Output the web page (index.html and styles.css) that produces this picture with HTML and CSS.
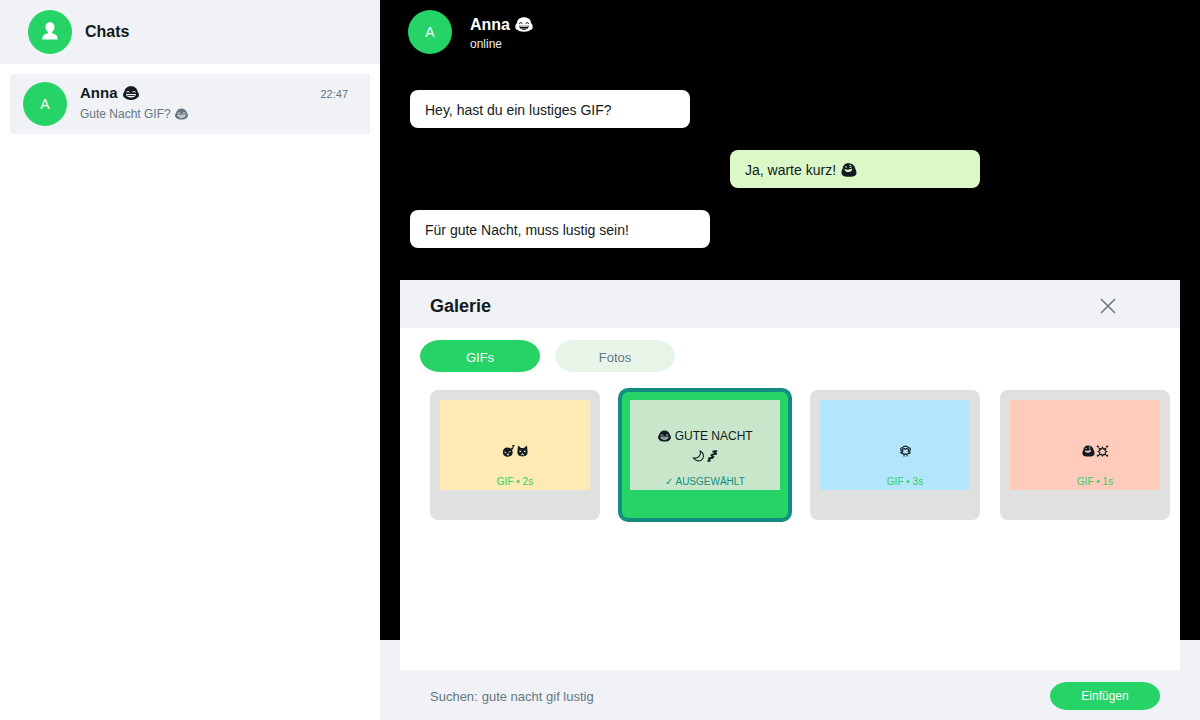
FILE: index.html
```html
<!DOCTYPE html>
<html lang="de">
<head>
    <meta charset="UTF-8">
    <meta name="viewport" content="width=device-width, initial-scale=1.0">
    <title>Chats</title>
    <link rel="stylesheet" href="styles.css">
</head>
<body>
    <svg class="symbols" aria-hidden="true">
        <symbol id="laugh" viewBox="0 0 16 14">
            <path class="fill" d="M8 .2C4.500.2 2 2.200 1.500 5.300.5 6.500 0 8 .1 9.600c.1 1.100.6 1.700 1.400 1.900 1.300 1.700 3.600 2.400 6.500 2.400s5.200-.7 6.500-2.400c.8-.2 1.300-.8 1.400-1.900.1-1.600-.4-3.100-1.400-4.300C14 2.200 11.500.2 8 .2z"/>
            <path class="line" d="M3.300 6.200Q5 4.800 6.600 6.200M9.400 6.200Q11 4.800 12.700 6.200"/>
            <path class="hole" d="M3 8h10c-.2 2.300-2.100 3.600-5 3.600S3.200 10.300 3 8z"/>
            <path class="fill" d="M4.300 9h7.400v.9H4.300z"/>
        </symbol>
        <symbol id="laugh-light" viewBox="0 0 18 15">
            <path class="fill" d="M9 .3C5 .3 2.300 2.500 1.900 6 .8 7.200.2 8.800.3 10.400c.1 1.300.7 2 1.700 2.200 1.500 1.600 4 2.200 7 2.200s5.500-.6 7-2.200c1-.2 1.600-.9 1.700-2.200.1-1.600-.5-3.200-1.600-4.400C15.700 2.500 13 .3 9 .3z"/>
            <path class="line" d="M4.200 6.800Q5.700 4.500 7.300 6.500M10.700 6.500Q12.300 4.500 13.800 6.800"/>
            <path class="hole" d="M4.200 8.700h9.600c-.2 2.600-2 4-4.800 4s-4.600-1.400-4.800-4z"/>
            <path class="fill" d="M5.200 9.200h7.600v.9H5.200zM6.500 10.900h.8v1h-.8zM8.600 10.900h.8v1h-.8zM10.700 10.900h.8v1h-.8z"/>
        </symbol>
        <symbol id="rofl" viewBox="0 0 16 14">
            <path class="fill" d="M7.500.2C4 .2 2 2.300 1.800 5.200.6 7.200.1 9.500.8 11.200c.8 2 3.200 2.600 7.200 2.600s6.400-.6 7.200-2.600c.6-1.600.2-3.800-1-5.800C13.600 2.300 11.300.2 7.500.2z"/>
            <path class="line" d="M4 3.600l1.900.7M8.300 2.600l1.800-.5M8.500 4.600l2-.5"/>
            <path class="hole" d="M3.300 6c2.700 1 5.300.8 8-.5-.2 2.300-1.500 3.600-3.900 3.600-2.300 0-3.800-1-4.100-3.100z"/>
        </symbol>
        <symbol id="sleepy" viewBox="0 0 14 14">
            <path class="fill" d="M6 3C2.700 2.800.5 5 .4 8.300c-.1 3.600 2 5.400 5.700 5.400s6-1.800 5.700-5.500C11.600 5 9.500 3.100 6 3z"/>
            <path class="line" d="M2.200 8.400l2.200.5M7.200 8.200l2.200-.4"/>
            <path class="hole" d="M5 10.200l2-.3.500 1.900-1.600.5z"/>
            <path class="stroke" d="M10 3.800l1.800.3-1.200 1.700M11.300.8l2-.2-1.500 2.600"/>
        </symbol>
        <symbol id="cat" viewBox="0 0 12 13">
            <path class="fill" d="M1.200.6l3.200 2.600h3.200L10.800.6l.7 6.500c.3 3.500-1.900 5.300-5.500 5.300S.2 10.600.5 7.100z"/>
            <path class="hole" d="M2.700 6l2.100.6-.7 1.300-1.400-.4zM9.300 6l-2.100.6.7 1.300 1.400-.4zM5.200 8.800h1.600L6 9.800z"/>
            <path class="line" d="M4.300 10.900l1.700-.8 1.700.8"/>
        </symbol>
        <symbol id="moon" viewBox="0 0 14 14">
            <path class="stroke" d="M9 1.200c1.400 4.600-2.400 9-7.900 8.100 2.300 4.100 7.900 4.700 10.500 1.200 2.300-3.200 1-7.800-2.600-9.300z"/>
        </symbol>
        <symbol id="zzz" viewBox="0 0 14 14">
            <path class="fill" d="M7.300.6l5.300-.4-.2 1.700-1.500 1.500 1.600.1-.7 1.900-3.700.6-1 1.200 2.200-.2-.6 1.900-1.300 1.300-2.800.5-.8 1.100 1.400.1-.7 1.400-3.400.6.200-1.800 1-1.200-.5-.5.400-1.600 3-.6.900-1.300-1.500.1.500-1.900 3.300-.9L9.200 3l-2.500.2z"/>
        </symbol>
        <symbol id="monkey" viewBox="0 0 14 14">
            <path class="stroke" d="M3.500 3.200C5 .7 9 .7 10.500 3.200c2.400-.5 2.900 2.900.9 3.800.3 2.400-1.400 3.700-4.400 3.700S2.300 9.400 2.600 7C.6 6.100 1.100 2.700 3.500 3.200z"/>
            <path class="stroke" d="M4 8.400L3.300 5.300 5.300 4 7 5l1.700-1 2 1.300-.7 3.100M1 8.500l2.700 2.200M13 8.500l-2.700 2.200M5.300 10.500v3M8.700 10.500v3"/>
        </symbol>
        <symbol id="boom" viewBox="0 0 14 14">
            <path class="stroke" d="M7 2.600l1.200 2.100 2.600-.8-.8 2.500 2 1.200-2 1.300.6 2.400-2.400-.4L7 12.700l-1.200-1.800-2.400.4.600-2.400-2-1.300 2-1.200-.8-2.500 2.600.8z"/>
            <path class="stroke bold" d="M.7 1l1.800 1.500M13.300 1l-1.800 1.500M.7 13.200l1.800-1.500M13.300 13.200l-1.800-1.500"/>
        </symbol>
    </svg>

    <div class="app">
        <aside class="sidebar">
            <header class="sidebar-header">
                <div class="avatar">
                    <svg class="person" viewBox="0 0 16 18" aria-hidden="true">
                        <path d="M8 .3C5.400.3 3.500 2.100 3.500 4.800c0 2.300 1 4.300 2.500 5.300v1.200c-3.200.8-5.700 2-5.700 6.200h15.400c0-4.200-2.500-5.400-5.700-6.200v-1.200c1.500-1 2.500-3 2.500-5.300C12.500 2.100 10.600.3 8 .3z"/>
                    </svg>
                </div>
                <h1>Chats</h1>
            </header>
            <a class="chat-item" href="#">
                <div class="avatar">A</div>
                <div class="chat-text">
                    <div class="chat-name">Anna <svg class="emoji"><use href="#laugh"/></svg></div>
                    <div class="chat-preview">Gute Nacht GIF? <svg class="emoji"><use href="#laugh"/></svg></div>
                </div>
                <time class="chat-time">22:47</time>
            </a>
        </aside>

        <main class="chat">
            <header class="chat-header">
                <div class="avatar">A</div>
                <div class="contact">
                    <h2>Anna <svg class="emoji"><use href="#laugh-light"/></svg></h2>
                    <div class="status">online</div>
                </div>
            </header>
            <div class="messages">
                <div class="message medium">Hey, hast du ein lustiges GIF?</div>
                <div class="message sent">Ja, warte kurz! <svg class="emoji"><use href="#rofl"/></svg></div>
                <div class="message">Für gute Nacht, muss lustig sein!</div>
            </div>
            <div class="chat-footer"></div>

            <section class="gallery">
                <header class="gallery-header">
                    <h2>Galerie</h2>
                    <button class="close" aria-label="Schließen">
                        <svg viewBox="0 0 16 16"><path d="M1 1l14 14M15 1L1 15"/></svg>
                    </button>
                </header>
                <div class="tabs">
                    <button class="tab active">GIFs</button>
                    <button class="tab">Fotos</button>
                </div>
                <div class="grid">
                    <button class="tile">
                        <span class="thumb yellow">
                            <span class="caption single"><svg class="emoji"><use href="#sleepy"/></svg><svg class="emoji"><use href="#cat"/></svg></span>
                            <span class="info">GIF • 2s</span>
                        </span>
                    </button>
                    <button class="tile selected">
                        <span class="thumb green">
                            <span class="caption"><svg class="emoji"><use href="#laugh"/></svg> GUTE NACHT</span>
                            <span class="caption"><svg class="emoji"><use href="#moon"/></svg><svg class="emoji"><use href="#zzz"/></svg></span>
                            <span class="info">✓ AUSGEWÄHLT</span>
                        </span>
                    </button>
                    <button class="tile">
                        <span class="thumb blue">
                            <span class="caption single"><svg class="emoji"><use href="#monkey"/></svg></span>
                            <span class="info">GIF • 3s</span>
                        </span>
                    </button>
                    <button class="tile">
                        <span class="thumb red">
                            <span class="caption single"><svg class="emoji"><use href="#rofl"/></svg><svg class="emoji"><use href="#boom"/></svg></span>
                            <span class="info">GIF • 1s</span>
                        </span>
                    </button>
                </div>
                <footer class="gallery-footer">
                    <label for="search">Suchen:</label>
                    <input type="text" id="search" value="gute nacht gif lustig">
                    <button class="insert">Einfügen</button>
                </footer>
            </section>
        </main>
    </div>
</body>
</html>
```
FILE: styles.css
```css
* {
    box-sizing: border-box;
}
body {
    margin: 0;
    font-family: "Liberation Sans", Arial, sans-serif;
    font-size: 14px;
    color: #111b21;
}
h1, h2 {
    margin: 0;
}
button, input {
    font-family: inherit;
    border: none;
    padding: 0;
}
button {
    cursor: pointer;
}
.symbols {
    position: absolute;
    width: 0;
    height: 0;
}
.app {
    display: flex;
    min-height: 100vh;
}

/* emoji */
.emoji {
    --hole: #f0f2f5;
    width: 16px;
    height: 14px;
    margin-left: 1px;
    vertical-align: -2px;
}
.fill {
    fill: currentColor;
}
.hole {
    fill: var(--hole);
}
.line {
    fill: none;
    stroke: var(--hole);
    stroke-width: 1;
}
.stroke {
    fill: none;
    stroke: currentColor;
    stroke-width: 1.3;
}
.stroke.bold {
    stroke-width: 2;
}

/* sidebar */
.sidebar {
    width: 380px;
    flex-shrink: 0;
    background: #fff;
}
.sidebar-header {
    display: flex;
    align-items: center;
    gap: 13px;
    height: 64px;
    padding: 0 28px;
    background: #f0f2f5;
}
.sidebar-header h1 {
    font-size: 16px;
}
.avatar {
    display: flex;
    align-items: center;
    justify-content: center;
    flex-shrink: 0;
    width: 44px;
    height: 44px;
    border-radius: 50%;
    background: #25d366;
    color: #fff;
    font-size: 14px;
}
.person {
    width: 16px;
    height: 18px;
    margin-bottom: 2px;
    fill: #fff;
}
.chat-item {
    display: flex;
    gap: 13px;
    height: 60px;
    margin: 10px;
    padding: 8px 22px 8px 13px;
    background: #f0f2f5;
    color: inherit;
    text-decoration: none;
}
.chat-text {
    flex: 1;
}
.chat-name {
    font-size: 15px;
    font-weight: bold;
    line-height: 22px;
}
.chat-preview {
    font-size: 12px;
    line-height: 20px;
    color: #667781;
}
.chat-preview .emoji {
    width: 13px;
    height: 12px;
}
.chat-time {
    font-size: 11px;
    line-height: 24px;
    color: #667781;
}

/* chat */
.chat {
    position: relative;
    display: flex;
    flex-direction: column;
    flex: 1;
    background: #000;
}
.chat-header {
    display: flex;
    align-items: center;
    gap: 18px;
    height: 64px;
    padding: 0 28px;
    color: #fff;
}
.contact {
    padding-top: 4px;
}
.chat-header h2 {
    font-size: 16px;
    line-height: 20px;
}
.chat-header .emoji {
    --hole: #000;
    width: 18px;
    height: 15px;
}
.status {
    font-size: 12px;
    line-height: 18px;
    color: #e9edef;
}
.messages {
    display: flex;
    flex-direction: column;
    flex: 1;
    gap: 22px;
    max-width: 600px;
    padding: 26px 0 0 30px;
}
.message {
    width: 300px;
    height: 38px;
    padding: 0 15px;
    border-radius: 8px;
    background: #fff;
    line-height: 40px;
}
.message.medium {
    width: 280px;
}
.message.sent {
    align-self: flex-end;
    width: 250px;
    background: #dcf8c6;
}
.sent .emoji {
    --hole: #dcf8c6;
}
.chat-footer {
    height: 80px;
    background: #f0f2f5;
}

/* gallery */
.gallery {
    position: absolute;
    top: 280px;
    right: 20px;
    bottom: 0;
    left: 20px;
    display: flex;
    flex-direction: column;
    background: #fff;
}
.gallery-header {
    display: flex;
    align-items: center;
    justify-content: space-between;
    height: 48px;
    padding: 4px 60px 0 30px;
    background: #f0f2f5;
}
.gallery-header h2 {
    font-size: 18px;
}
.close {
    display: flex;
    align-items: center;
    justify-content: center;
    width: 24px;
    height: 24px;
    background: none;
}
.close svg {
    width: 16px;
    height: 16px;
    fill: none;
    stroke: #667781;
    stroke-width: 1.5;
}
.tabs {
    display: flex;
    gap: 15px;
    padding: 12px 20px 18px;
}
.tab {
    width: 120px;
    height: 32px;
    padding-top: 2px;
    border-radius: 20px / 16px;
    background: #e7f5e9;
    color: #667781;
    font-size: 13px;
}
.tab.active {
    background: #25d366;
    color: #fff;
}
.grid {
    display: grid;
    grid-template-columns: repeat(4, 1fr);
    align-content: start;
    gap: 20px;
    flex: 1;
    padding: 0 10px 0 30px;
}
.tile {
    display: flex;
    align-items: flex-start;
    height: 130px;
    padding: 10px;
    border-radius: 8px;
    background: #e0e0e0;
}
.tile.selected {
    background: #25d366;
    box-shadow: 0 0 0 2px #128c7e, inset 0 0 0 2px #128c7e;
}
.thumb {
    display: flex;
    flex-direction: column;
    align-items: center;
    justify-content: flex-end;
    flex: 1;
    height: 90px;
    color: #111b21;
}
.yellow { background: #ffeab3; }
.green { background: #c8e6c9; }
.blue { background: #b3e5fc; }
.red { background: #ffccbc; }
.yellow .emoji { --hole: #ffeab3; }
.green .emoji { --hole: #c8e6c9; }
.red .emoji { --hole: #ffccbc; }
.blue, .red {
    padding-left: 20px;
}
.caption {
    font-size: 12px;
    line-height: 20px;
}
.caption.single {
    margin-bottom: 5px;
}
.caption .emoji {
    width: 13px;
    height: 12px;
}
.info {
    margin-top: 8px;
    font-size: 10px;
    line-height: 16px;
    color: #25d366;
}
.selected .info {
    color: #128c7e;
}
.gallery-footer {
    display: flex;
    align-items: center;
    gap: 4px;
    height: 50px;
    padding: 2px 20px 0 30px;
    background: #f0f2f5;
    color: #667781;
    font-size: 13px;
}
.gallery-footer input {
    flex: 1;
    background: none;
    color: inherit;
    font-size: 13px;
}
.insert {
    width: 110px;
    height: 28px;
    border-radius: 18px / 14px;
    background: #25d366;
    color: #fff;
    font-size: 12px;
}
```
